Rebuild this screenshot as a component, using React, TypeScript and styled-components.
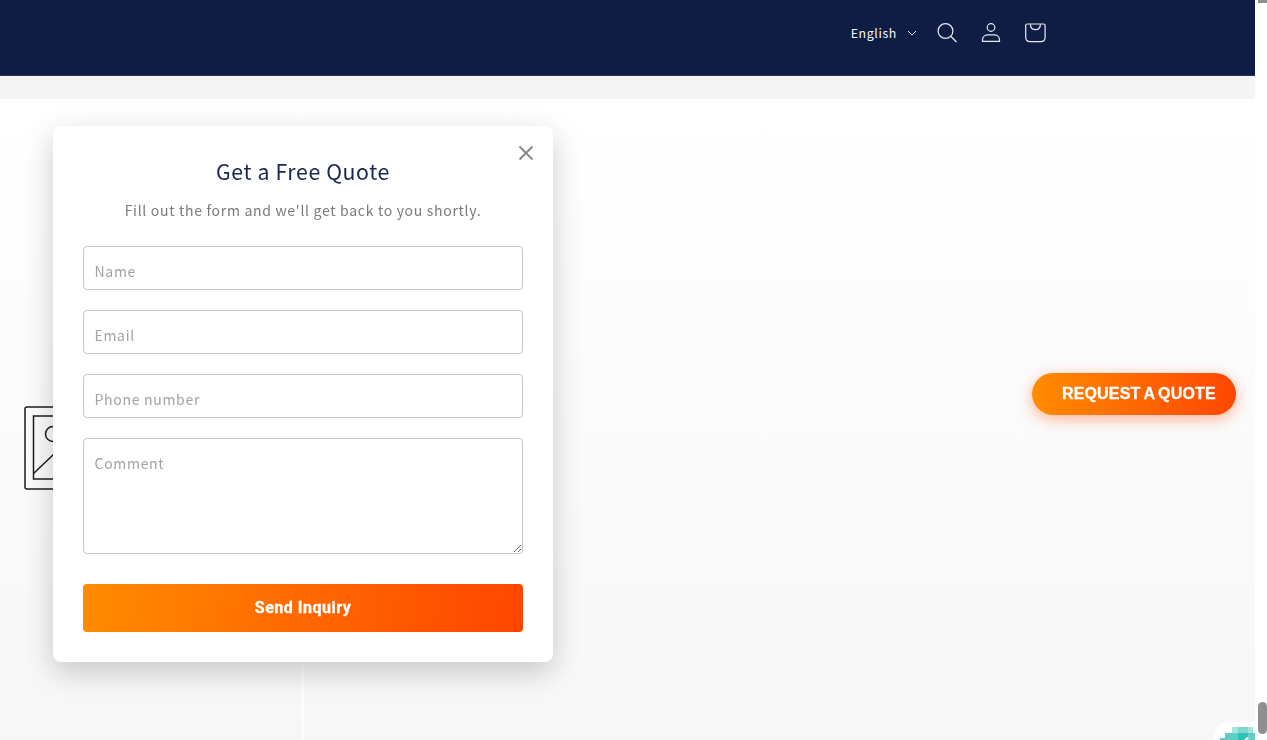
import React from 'react'
import styled, { createGlobalStyle } from 'styled-components'

const GlobalStyle = createGlobalStyle`
  html, body {
    margin: 0;
    height: 740px;
    overflow: hidden;
    background: #fff;
  }
  * {
    box-sizing: border-box;
  }
`

const SearchIcon = () => (
  <svg width="44" height="44" viewBox="0 0 44 44" fill="none" stroke="currentColor" strokeWidth="1.2">
    <circle cx="20.5" cy="20" r="7.4" />
    <path d="M26 25.500l5.500 5.500" />
  </svg>
)

const AccountIcon = () => (
  <svg width="44" height="44" viewBox="0 0 44 44" fill="none" stroke="currentColor" strokeWidth="1.2">
    <circle cx="22" cy="16.500" r="3.800" />
    <path d="M13.500 30.400v-1.600c0-3.200 2.600-5 5.600-5h5.800c3 0 5.600 1.800 5.600 5v1.600z" />
  </svg>
)

const CartIcon = () => (
  <svg width="44" height="44" viewBox="0 0 44 44" fill="none" stroke="currentColor" strokeWidth="1.2">
    <path d="M14 13h16.800c.9 0 1.300.5 1.300 1.300v12c0 2.600-1.900 4.400-4.400 4.400H17.100c-2.500 0-4.400-1.800-4.400-4.400v-12c0-.8.400-1.300 1.300-1.300z" />
    <path d="M17.400 13.200c0 3.400 2 5.400 5 5.400s5-2 5-5.400" />
  </svg>
)

const Chevron = () => (
  <svg width="10" height="6" viewBox="0 0 10 6" fill="none" stroke="currentColor" strokeWidth="1">
    <path d="M1 1l4 4 4-4" />
  </svg>
)

const PlaceholderIcon = () => (
  <svg width="120" height="86" viewBox="0 0 120 86" fill="none" stroke="#1c1c1c" strokeWidth="1.500">
    <rect x="1" y="1" width="118" height="82" rx="2" />
    <rect x="9.500" y="10" width="101" height="63" />
    <circle cx="29" cy="28" r="7.500" />
    <path d="M9.500 67.500L30 48l24 25" />
  </svg>
)

const CloseIcon = () => (
  <svg width="16" height="16" viewBox="0 0 16 16" fill="none" stroke="currentColor" strokeWidth="1.800">
    <path d="M1.500 1.500l13 13M14.500 1.500l-13 13" />
  </svg>
)

const WidgetPixels = () => (
  <svg width="35" height="13" viewBox="0 0 35 13">
    <rect x="12" y="0" width="6" height="6" fill="#a5e3dd" />
    <rect x="18" y="0" width="10" height="6" fill="#7fd8cf" />
    <rect x="28" y="0" width="5" height="6" fill="#a5e3dd" />
    <rect x="5" y="6" width="13" height="5" fill="#5fcfc6" />
    <rect x="18" y="6" width="10" height="7" fill="#2cc0b6" />
    <rect x="28" y="6" width="7" height="7" fill="#5fcfc6" />
    <rect x="0" y="11" width="18" height="2" fill="#5fcfc6" />
    <path d="M24 13l3-3 2 1-2 2z" fill="#fff" />
  </svg>
)

export default function App() {
  return (
    <>
      <GlobalStyle />
      <Screen>
        <Page>
          <Header>
            <LanguagePicker>
              English
              <Chevron />
            </LanguagePicker>
            <HeaderIcon><SearchIcon /></HeaderIcon>
            <HeaderIcon><AccountIcon /></HeaderIcon>
            <HeaderIcon><CartIcon /></HeaderIcon>
          </Header>
          <Band />
          <Main>
            <LeftColumn>
              <PlaceholderIcon />
            </LeftColumn>
            <Modal>
              <CloseButton aria-label="Close"><CloseIcon /></CloseButton>
              <Title>Get a Free Quote</Title>
              <Subtitle>Fill out the form and we'll get back to you shortly.</Subtitle>
              <Form onSubmit={(e) => e.preventDefault()}>
                <Field placeholder="Name" />
                <Field placeholder="Email" />
                <Field placeholder="Phone number" />
                <CommentField placeholder="Comment" />
                <SendButton type="submit">Send Inquiry</SendButton>
              </Form>
            </Modal>
            <Widget>
              <WidgetPixels />
            </Widget>
          </Main>
        </Page>
        <Scrollbar>
          <ThumbTop />
          <ThumbBottom />
        </Scrollbar>
        <QuoteButton>REQUEST A QUOTE</QuoteButton>
      </Screen>
    </>
  )
}

const Screen = styled.div`
  display: flex;
  width: 1267px;
  height: 740px;
  overflow: hidden;
  font-family: 'Noto Sans CJK JP', 'Noto Sans', sans-serif;
`

const Page = styled.div`
  display: flex;
  flex-direction: column;
  width: 1255px;
  height: 740px;
`

const Header = styled.header`
  display: flex;
  align-items: center;
  justify-content: flex-end;
  flex: none;
  height: 76px;
  padding: 0 198px 10px 0;
  background: #0f1c43;
  border-bottom: 1px solid #2b3556;
  color: #fff;
`

const LanguagePicker = styled.div`
  display: flex;
  align-items: center;
  gap: 10px;
  margin-right: 8px;
  font-size: 12.400px;
  letter-spacing: 0.6px;
  color: #f2f6fb;
`

const HeaderIcon = styled.span`
  display: flex;
  width: 44px;
  height: 44px;
  color: #e9ebf1;
`

const Band = styled.div`
  flex: none;
  height: 23px;
  background: #f5f5f5;
`

const Main = styled.main`
  position: relative;
  flex: 1;
  background: linear-gradient(180deg, #ffffff 0%, #f7f7f7 100%);
`

const LeftColumn = styled.div`
  width: 304px;
  height: 100%;
  padding: 307px 0 0 24px;
  border-right: 2px solid rgba(255, 255, 255, 0.8);
`

const Modal = styled.section`
  position: absolute;
  top: 27px;
  left: 53px;
  width: 500px;
  height: 536px;
  padding: 29px 30px 30px;
  background: #fff;
  border-radius: 8px;
  box-shadow: 0 10px 30px rgba(0, 0, 0, 0.2);
  will-change: transform;
`

const CloseButton = styled.button`
  position: absolute;
  top: 19px;
  right: 19px;
  display: flex;
  padding: 0;
  border: 0;
  background: none;
  color: #858585;
`

const Title = styled.h2`
  margin: 0;
  font-size: 21.300px;
  font-weight: 400;
  line-height: 32px;
  letter-spacing: 0.6px;
  text-align: center;
  color: #1a2750;
`

const Subtitle = styled.p`
  margin: 11px 0 0;
  font-size: 14px;
  line-height: 24px;
  letter-spacing: 0.7px;
  text-align: center;
  color: #7a7a7a;
`

const Form = styled.form`
  display: flex;
  flex-direction: column;
  gap: 20px;
  margin-top: 24px;
`

const Field = styled.input`
  display: block;
  width: 100%;
  height: 44px;
  padding: 5px 10.500px 0;
  border: 1px solid #c8c8c8;
  border-radius: 4px;
  outline: none;
  background: #fff;
  font: 400 14px 'Noto Sans CJK JP', 'Noto Sans', sans-serif;
  letter-spacing: 0.7px;
  &::placeholder {
    color: #a3a3a3;
    opacity: 1;
  }
`

const CommentField = styled.textarea`
  display: block;
  width: 100%;
  height: 116px;
  padding: 14px 10.500px;
  border: 1px solid #c8c8c8;
  border-radius: 4px;
  outline: none;
  background: #fff;
  font: 400 14px 'Noto Sans CJK JP', 'Noto Sans', sans-serif;
  letter-spacing: 0.7px;
  &::placeholder {
    color: #a3a3a3;
    opacity: 1;
  }
`

const SendButton = styled.button`
  height: 48px;
  margin-top: 10px;
  padding: 0 0 2px;
  border: 0;
  border-radius: 4px;
  background: linear-gradient(100deg, #ff8c00 0%, #ff4500 100%);
  color: #fff;
  font: 700 16px Roboto, sans-serif;
  letter-spacing: 0.5px;
  -webkit-text-stroke: 0.3px #fff;
`

const Widget = styled.div`
  position: absolute;
  right: 0;
  bottom: 0;
  width: 41px;
  height: 18px;
  padding: 5px 0 0 6px;
  background: #fff;
  border-top-left-radius: 14px;
  line-height: 0;
`

const Scrollbar = styled.div`
  display: flex;
  flex-direction: column;
  justify-content: space-between;
  width: 12px;
  height: 740px;
  padding: 0 0 6px 3px;
  background: #fff;
`

const ThumbTop = styled.div`
  width: 9px;
  height: 3px;
  background: #8f8f8f;
`

const ThumbBottom = styled.div`
  width: 9px;
  height: 32px;
  border-radius: 4.500px;
  background: #8f8f8f;
`

const QuoteButton = styled.button`
  position: fixed;
  top: 373px;
  left: 1032px;
  width: 204px;
  height: 42px;
  padding: 0 21px 0 30px;
  border: 0;
  border-radius: 21px;
  background: linear-gradient(90deg, #ff8c00 0%, #ff4500 100%);
  box-shadow: 0 4px 15px rgba(255, 69, 0, 0.4);
  color: #fff;
  font: 700 16px 'Liberation Sans', Arial, sans-serif;
  letter-spacing: 0.15px;
  word-spacing: -1px;
  -webkit-text-stroke: 0.3px #fff;
  white-space: nowrap;
  text-align: left;
  will-change: transform;
`
